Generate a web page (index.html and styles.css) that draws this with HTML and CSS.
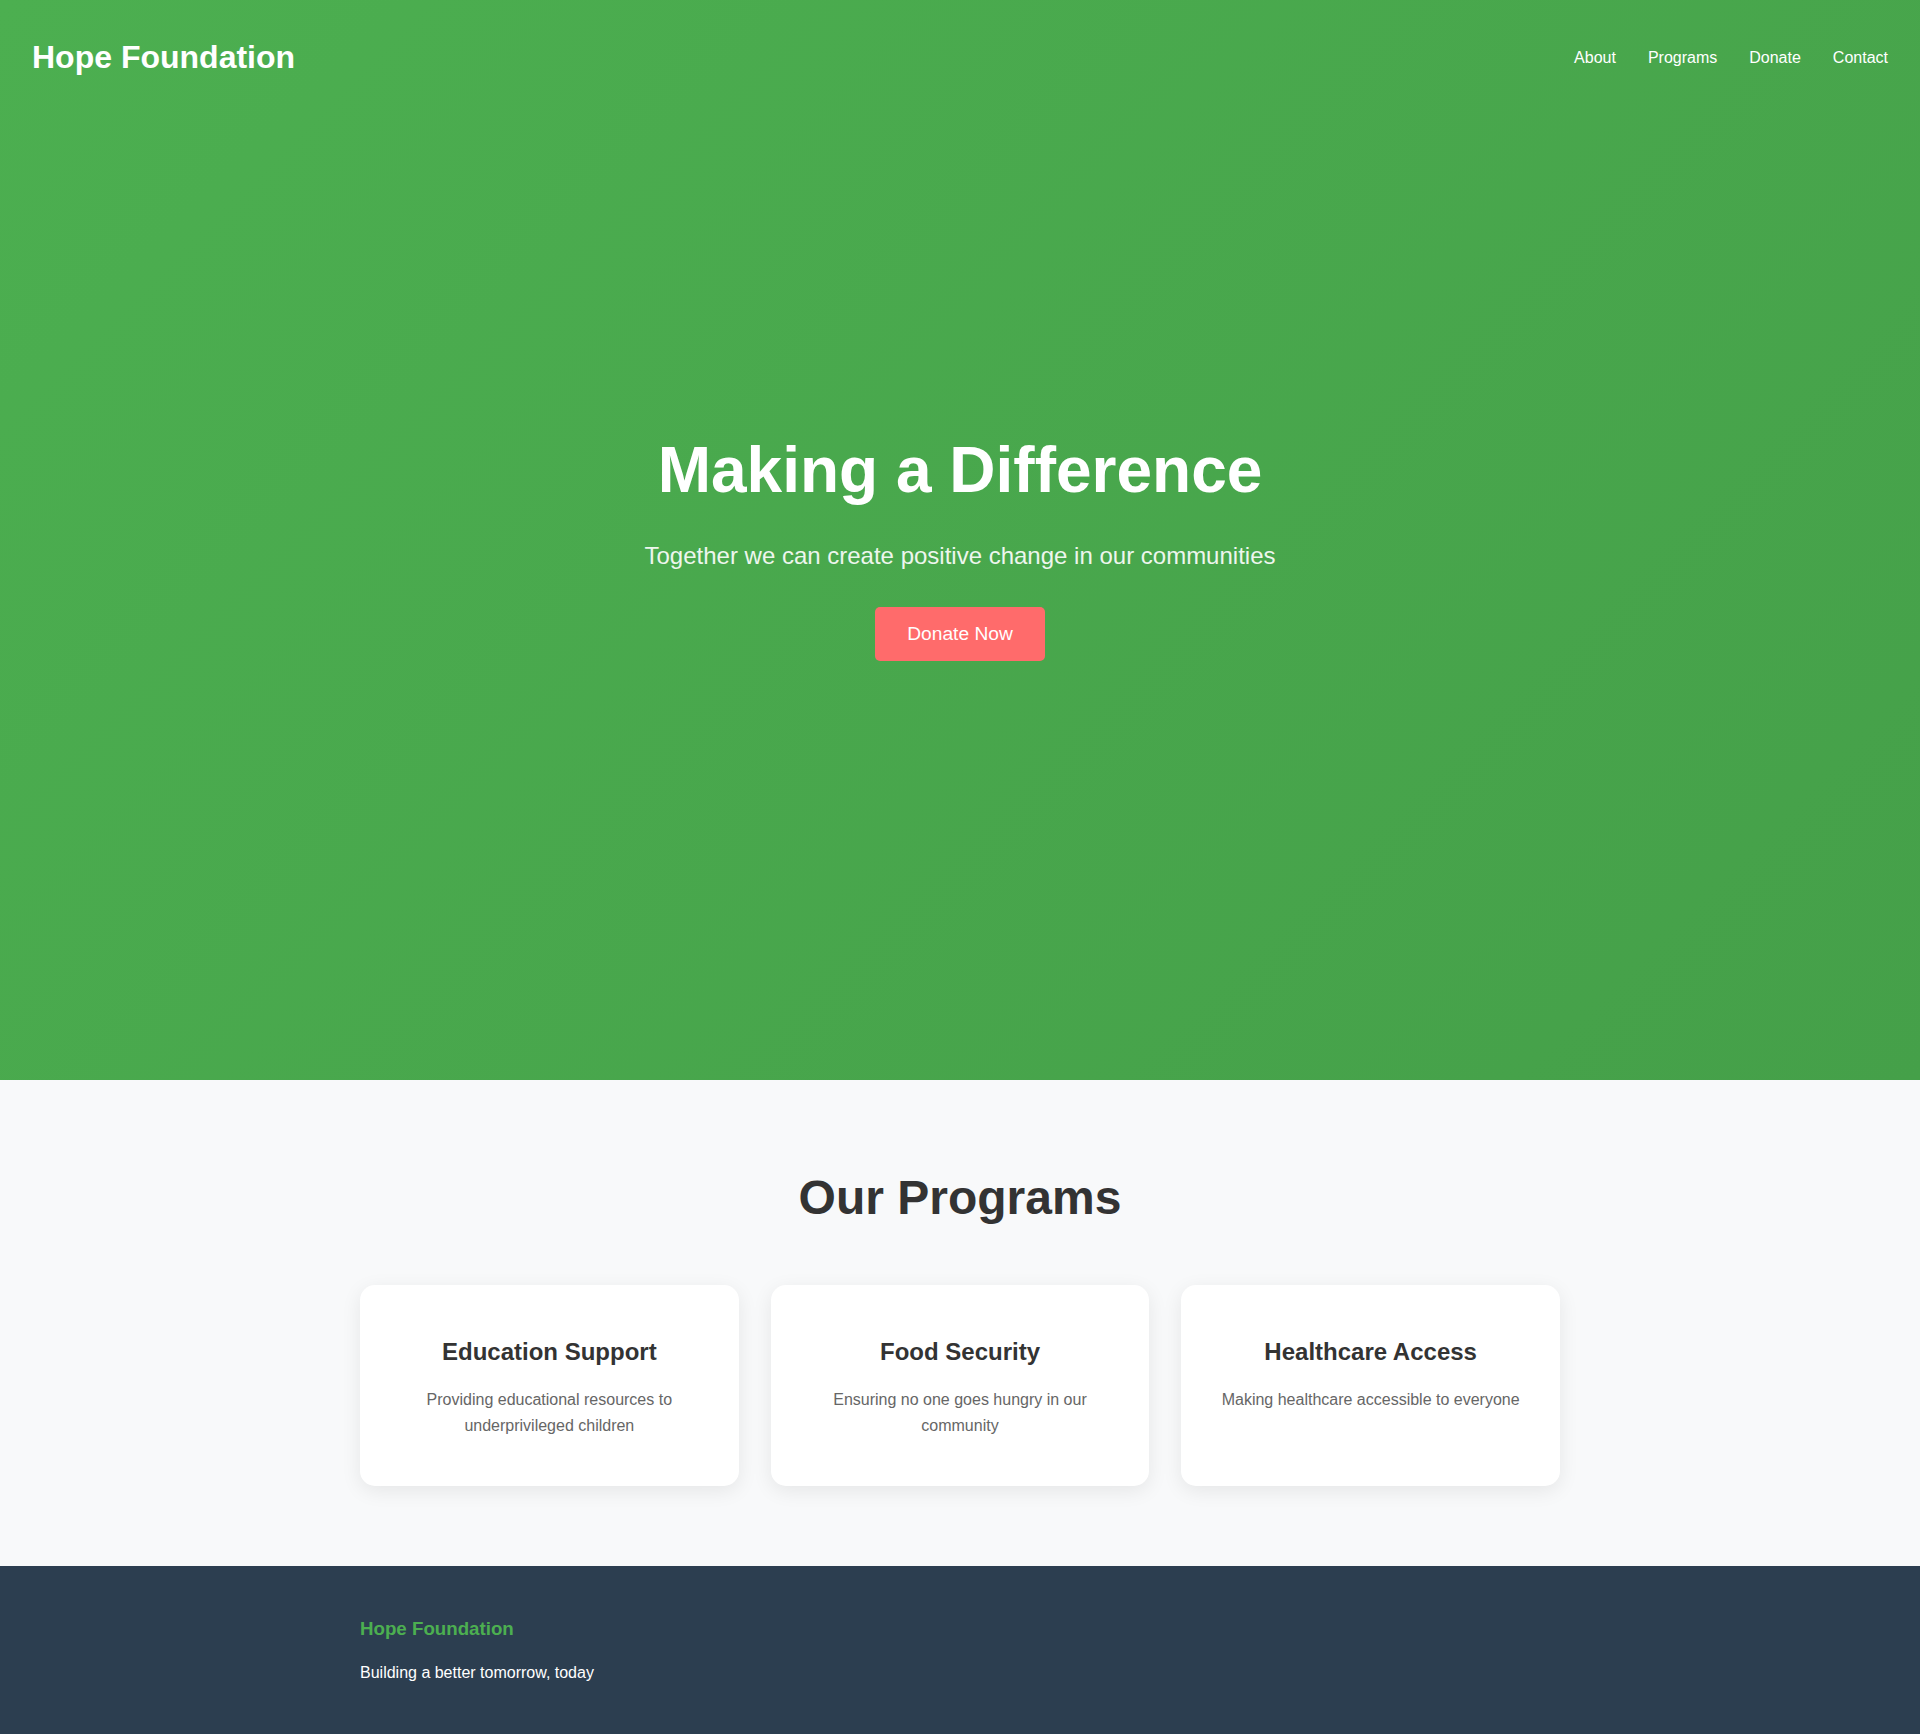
FILE: index.html
```html
<!DOCTYPE html>
<html lang="en">
<head>
<meta charset="UTF-8">
<title>Hope Foundation</title>
<link rel="stylesheet" href="styles.css">
</head>
<body>
<section class="hero">
  <header class="site-header">
    <div class="logo">Hope Foundation</div>
    <nav class="nav">
      <a href="#about">About</a>
      <a href="#programs">Programs</a>
      <a href="#donate">Donate</a>
      <a href="#contact">Contact</a>
    </nav>
  </header>
  <div class="hero-content">
    <h1>Making a Difference</h1>
    <p class="hero-sub">Together we can create positive change in our communities</p>
    <button class="btn-donate" type="button">Donate Now</button>
  </div>
</section>

<section class="programs" id="programs">
  <div class="container">
    <h2 class="section-title">Our Programs</h2>
    <div class="program-grid">
      <div class="card">
        <h3>Education Support</h3>
        <p>Providing educational resources to underprivileged children</p>
      </div>
      <div class="card">
        <h3>Food Security</h3>
        <p>Ensuring no one goes hungry in our community</p>
      </div>
      <div class="card">
        <h3>Healthcare Access</h3>
        <p>Making healthcare accessible to everyone</p>
      </div>
    </div>
  </div>
</section>

<footer class="site-footer" id="contact">
  <div class="container">
    <h3 class="footer-title">Hope Foundation</h3>
    <p class="footer-text">Building a better tomorrow, today</p>
  </div>
</footer>
</body>
</html>
```

FILE: styles.css
```css
* {
  margin: 0;
  padding: 0;
  box-sizing: border-box;
}

body {
  font-family: "Liberation Sans", Arial, sans-serif;
  line-height: 1.6;
  color: #333;
  background: #f8f9fa;
}

.hero {
  height: 1080px;
  display: grid;
  grid-template-columns: 1fr;
  grid-template-rows: 1fr;
  background: linear-gradient(135deg, #4caf50 0%, #45a049 100%);
  color: #fff;
}

.site-header {
  grid-area: 1 / 1;
  align-self: start;
  display: flex;
  justify-content: space-between;
  align-items: center;
  padding: 2rem;
}

.logo {
  font-size: 2rem;
  font-weight: bold;
}

.nav {
  display: flex;
  gap: 2rem;
}

.nav a {
  color: #fff;
  text-decoration: none;
  font-size: 1rem;
}

.hero-content {
  grid-area: 1 / 1;
  align-self: center;
  text-align: center;
}

.hero-content h1 {
  font-size: 4rem;
  font-weight: bold;
  margin-bottom: 1rem;
}

.hero-sub {
  font-size: 1.5rem;
  opacity: 0.9;
  margin-bottom: 2rem;
}

.btn-donate {
  font-family: "Liberation Sans", Arial, sans-serif;
  font-size: 1.2rem;
  color: #fff;
  background: #ff6b6b;
  border: none;
  border-radius: 5px;
  padding: 1rem 2rem;
  cursor: pointer;
}

.programs {
  background: #f8f9fa;
  padding: 5rem 2rem;
}

.container {
  max-width: 1200px;
  margin: 0 auto;
}

.section-title {
  text-align: center;
  font-size: 3rem;
  font-weight: bold;
  color: #333;
  margin-bottom: 3rem;
}

.program-grid {
  display: grid;
  grid-template-columns: repeat(3, 1fr);
  gap: 2rem;
}

.card {
  background: #fff;
  border-radius: 15px;
  padding: 3rem 2rem;
  text-align: center;
  box-shadow: 0 5px 20px rgba(0, 0, 0, 0.08);
}

.card h3 {
  font-size: 1.5rem;
  color: #333;
  margin-bottom: 1rem;
}

.card p {
  font-size: 1rem;
  color: #666;
}

.site-footer {
  background: #2c3e50;
  color: #fff;
  padding: 3rem 2rem;
}

.footer-title {
  font-size: 1.17rem;
  color: #4caf50;
  font-weight: bold;
  margin-bottom: 1rem;
}

.footer-text {
  font-size: 1rem;
}
```
